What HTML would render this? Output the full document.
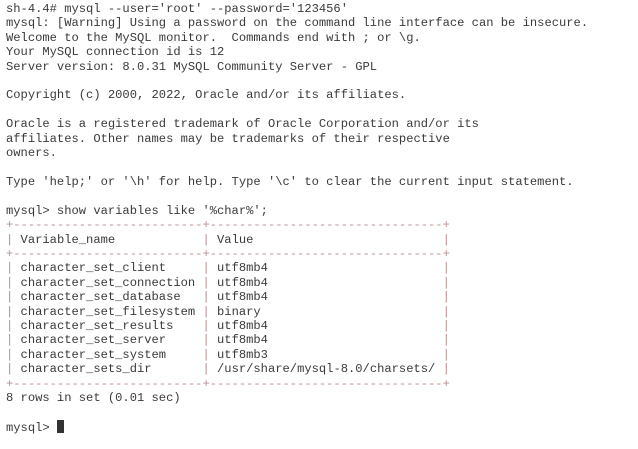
<!DOCTYPE html>
<html><head><meta charset="utf-8"><style>
html,body{margin:0;padding:0;background:#fff;width:638px;height:449px;overflow:hidden}
pre{margin:0;position:absolute;left:6px;top:2px;font-family:"Liberation Mono","Courier New",monospace;font-size:12.13px;line-height:14.41px;color:#3a3a3a;letter-spacing:0}
.b{color:#b89090}
.c{display:inline-block;width:7px;height:13px;background:#333;vertical-align:-2px}
</style></head><body><pre>sh-4.4# mysql --user='root' --password='123456'
mysql: [Warning] Using a password on the command line interface can be insecure.
Welcome to the MySQL monitor.  Commands end with ; or \g.
Your MySQL connection id is 12
Server version: 8.0.31 MySQL Community Server - GPL

Copyright (c) 2000, 2022, Oracle and/or its affiliates.

Oracle is a registered trademark of Oracle Corporation and/or its
affiliates. Other names may be trademarks of their respective
owners.

Type 'help;' or '\h' for help. Type '\c' to clear the current input statement.

mysql&gt; show variables like '%char%';
<span class="b">+--------------------------+--------------------------------+</span>
<span class="b">|</span> Variable_name            <span class="b">|</span> Value                          <span class="b">|</span>
<span class="b">+--------------------------+--------------------------------+</span>
<span class="b">|</span> character_set_client     <span class="b">|</span> utf8mb4                        <span class="b">|</span>
<span class="b">|</span> character_set_connection <span class="b">|</span> utf8mb4                        <span class="b">|</span>
<span class="b">|</span> character_set_database   <span class="b">|</span> utf8mb4                        <span class="b">|</span>
<span class="b">|</span> character_set_filesystem <span class="b">|</span> binary                         <span class="b">|</span>
<span class="b">|</span> character_set_results    <span class="b">|</span> utf8mb4                        <span class="b">|</span>
<span class="b">|</span> character_set_server     <span class="b">|</span> utf8mb4                        <span class="b">|</span>
<span class="b">|</span> character_set_system     <span class="b">|</span> utf8mb3                        <span class="b">|</span>
<span class="b">|</span> character_sets_dir       <span class="b">|</span> /usr/share/mysql-8.0/charsets/ <span class="b">|</span>
<span class="b">+--------------------------+--------------------------------+</span>
8 rows in set (0.01 sec)

mysql&gt; <span class="c"></span></pre></body></html>
